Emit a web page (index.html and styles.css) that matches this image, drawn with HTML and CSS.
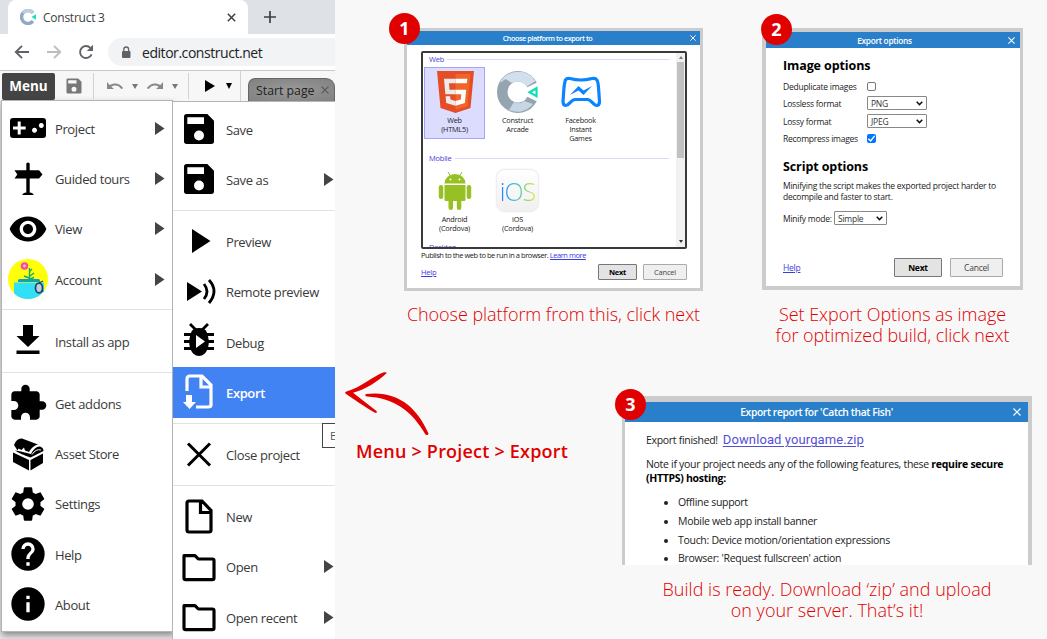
FILE: index.html
```html
<!DOCTYPE html>
<html lang="en">
<head>
<meta charset="utf-8">
<title>Construct 3 export guide</title>
<link rel="stylesheet" href="styles.css">
</head>
<body>
<svg class="defs" width="0" height="0">
  <symbol id="save" viewBox="0 0 24 24"><path fill-rule="evenodd" d="M4.6 3H17l4 4v12.400a1.600 1.600 0 0 1-1.600 1.600H4.600A1.600 1.600 0 0 1 3 19.400V4.600A1.600 1.600 0 0 1 4.600 3zM5 5v4h10V5zM12 12.900a3 3 0 1 0 0 6 3 3 0 0 0 0-6z"/></symbol>
  <symbol id="folder" viewBox="0 0 24 24"><path fill="none" stroke="currentColor" stroke-width="1.900" stroke-linejoin="round" d="M3 5.200h6.600l2 2H20a1 1 0 0 1 1 1v10.400a1 1 0 0 1-1 1H4a1 1 0 0 1-1-1z"/></symbol>
  <symbol id="caret" viewBox="0 0 10 13"><path d="M0 0l9.500 6.500L0 13z"/></symbol>
</svg>
<div class="page">
  <section class="browser">
    <div class="tabstrip">
      <div class="tab">
        <svg width="16" height="16" viewBox="0 0 42 42"><path d="M34 32A17 17 0 1 1 34 10" fill="none" stroke="#8fa9c4" stroke-width="9"/><path d="M8 10A17 17 0 0 1 33 9" fill="none" stroke="#bccfe2" stroke-width="9"/><path d="M42 14v14l-12-7z" fill="#19e0c0"/></svg>
        <span class="tab-title">Construct 3</span>
        <svg width="9" height="9" viewBox="0 0 9 9"><path d="M.8.8l7.400 7.400M8.200.8L.8 8.200" stroke="#3c4043" stroke-width="1.500"/></svg>
      </div>
      <svg class="plus" width="12" height="12" viewBox="0 0 12 12"><path d="M6 0v12M0 6h12" stroke="#3c4043" stroke-width="1.700"/></svg>
    </div>
    <div class="navbar">
      <svg width="16" height="16" viewBox="0 0 16 16"><path d="M15 8H2M8 1.800L1.800 8 8 14.200" fill="none" stroke="#5f6368" stroke-width="1.900"/></svg>
      <svg width="16" height="16" viewBox="0 0 16 16"><path d="M1 8h13M8 1.800L14.200 8 8 14.200" fill="none" stroke="#bbbdc0" stroke-width="1.900"/></svg>
      <svg width="16" height="16" viewBox="0 0 16 16"><path d="M13.600 10.300A6 6 0 1 1 12.400 3.900" fill="none" stroke="#5f6368" stroke-width="1.900"/><path d="M15 .8v6.200H8.800z" fill="#5f6368"/></svg>
      <div class="omnibox">
        <svg width="10" height="13" viewBox="0 0 10 13"><rect x="1" y="5" width="8.500" height="7" rx="1" fill="#5f6368"/><path d="M2.800 5.500V3.400a2.400 2.400 0 0 1 4.800 0v2.100" fill="none" stroke="#5f6368" stroke-width="1.300"/></svg>
        <span class="url">editor.construct.net</span>
      </div>
    </div>
    <div class="toolbar">
      <div class="menu-button"><span>Menu</span></div>
      <svg class="tb-save" width="20" height="20"><use href="#save"/></svg>
      <div class="tb-group history">
        <svg width="18" height="10" viewBox="0 0 18 10"><path d="M1 1v7h7L5.300 5.700C8 3.800 12.500 3.500 15.200 8l2-.7C14.200 1.800 8 1.300 3.600 4z" fill="#888"/></svg>
        <svg width="6" height="5" viewBox="0 0 6 5"><path d="M0 0h6L3 5z" fill="#777"/></svg>
        <svg width="18" height="10" viewBox="0 0 18 10"><path d="M17 1v7h-7l2.700-2.300C10 3.800 5.500 3.500 2.800 8l-2-.7C3.800 1.800 10 1.300 14.400 4z" fill="#888"/></svg>
        <svg width="6" height="5" viewBox="0 0 6 5"><path d="M0 0h6L3 5z" fill="#777"/></svg>
      </div>
      <div class="tb-group run">
        <svg width="10" height="12" viewBox="0 0 10 12"><path d="M0 0l10 6-10 6z"/></svg>
        <svg width="6" height="6" viewBox="0 0 6 6"><path d="M0 0h6L3 6z"/></svg>
      </div>
      <div class="tb-group tabs"><div class="start-tab"><span>Start page</span>
        <svg width="8" height="8" viewBox="0 0 8 8"><path d="M.5.5l7 7M7.500.5l-7 7" stroke="#5c5c5c" stroke-width="1.100"/></svg>
      </div></div>
    </div>
    <div class="menus">
      <div class="menu main-menu">
        <div class="item"><svg class="icon" viewBox="0 0 40 40"><path fill-rule="evenodd" d="M5 10h30q3 0 3 3v14q0 3-3 3H5q-3 0-3-3V13q0-3 3-3zm4.700 3.500v5H5v3h4.700v5h3v-5h5v-3h-5v-5zM33.300 15a2.500 2.500 0 1 0 .01 0zM26.500 19.700a2.500 2.500 0 1 0 .01 0z"/></svg><span>Project</span><svg class="caret"><use href="#caret"/></svg></div>
        <div class="item"><svg class="icon" viewBox="0 0 40 40"><path d="M18.300 5.500q1.700-1.800 3.400 0v6.700H31l3.500 4.300L31 20.500h-9.300v14q3.300 0 4 2.500H14.300q.7-2.500 4-2.500v-14H6.500l2.800-4-2.800-4.300h11.800z"/></svg><span>Guided tours</span><svg class="caret"><use href="#caret"/></svg></div>
        <div class="item"><svg class="icon" viewBox="0 0 24 24"><path d="M12 4.500C7 4.500 2.730 7.610 1 12c1.730 4.390 6 7.500 11 7.500s9.270-3.110 11-7.500c-1.730-4.390-6-7.500-11-7.500zM12 17c-2.760 0-5-2.240-5-5s2.240-5 5-5 5 2.240 5 5-2.240 5-5 5zm0-8c-1.660 0-3 1.340-3 3s1.340 3 3 3 3-1.340 3-3-1.340-3-3-3z"/></svg><span>View</span><svg class="caret"><use href="#caret"/></svg></div>
        <div class="item"><svg class="icon" viewBox="0 0 40 40"><defs><clipPath id="disc"><circle cx="20" cy="20" r="20"/></clipPath></defs><g clip-path="url(#disc)"><path fill="#ffff08" d="M0 0h40v40H0z"/><path d="M21.500 22V9M21 19l-5-2M22 17l4-3M21 13l3-3M22 20l4-1.500" stroke="#16a878" stroke-width="1.400" fill="none"/><circle cx="16.500" cy="7" r="3.800" fill="#f54da0"/><circle cx="16.500" cy="7" r="1.400" fill="#ffb8dc"/><path d="M6 23.500h30V40H12q-6-1-6-7z" fill="#32dff8"/><path d="M10 21.500q0-1.500 1.500-1.500h19q1.500 0 1.500 1.500V23H10z" fill="#10a5a9"/><ellipse cx="31" cy="29" rx="3.500" ry="4.800" fill="#c3cde0" stroke="#234265" stroke-width="1.700"/><path d="M31 24l4-2M34 31l2 3" stroke="#234265" stroke-width="1.300"/></g></svg><span>Account</span><svg class="caret"><use href="#caret"/></svg></div>
        <hr>
        <div class="item"><svg class="icon" viewBox="0 0 40 40"><path d="M15 4h10v11h6.500L20 26 8.500 15H15zM8.500 29.500h23V33h-23z"/></svg><span>Install as app</span></div>
        <hr>
        <div class="item"><svg class="icon" viewBox="0 0 24 24"><path d="M20.500 11H19V7c0-1.100-.9-2-2-2h-4V3.500a2.500 2.500 0 0 0-5 0V5H4c-1.100 0-1.990.9-1.990 2v3.800H3.500c1.490 0 2.700 1.210 2.700 2.700s-1.210 2.700-2.700 2.700H2V20c0 1.100.9 2 2 2h3.800v-1.500c0-1.490 1.210-2.700 2.700-2.700s2.700 1.210 2.700 2.700V22H17c1.100 0 2-.9 2-2v-4h1.500a2.500 2.500 0 0 0 0-5z"/></svg><span>Get addons</span></div>
        <div class="item"><svg class="icon" viewBox="0 0 40 40"><path d="M5 18.500l16 7.500V36.500L5 28zM22.500 26L35 19.500V29l-12.500 7.500zM6 11q2.500-7 8-6.500l16 6q-6 1.500-9 7.500l-4-1.500-1-3-2.500 2.500-3-1.500-1 2zM35.500 17l-13 6.500Q12 20 7 16.500l6 1 10 2.500q4-8 9-7.500 3.500 1 3.500 4.500z"/><path d="M24 20.500q4-6 9-4.500" fill="none" stroke="#fff" stroke-width="1"/></svg><span>Asset Store</span></div>
        <div class="item"><svg class="icon" viewBox="0 0 24 24"><path d="M19.430 12.980c.04-.32.07-.64.07-.98s-.03-.66-.07-.98l2.110-1.650c.19-.15.240-.42.120-.64l-2-3.460c-.12-.22-.39-.3-.61-.22l-2.490 1c-.52-.4-1.080-.73-1.690-.98l-.38-2.650A.488.488 0 0 0 14 2h-4c-.25 0-.46.180-.49.420l-.38 2.650c-.61.250-1.170.590-1.690.98l-2.490-1c-.23-.09-.49 0-.61.220l-2 3.460c-.13.220-.07.490.12.640l2.110 1.650c-.04.320-.07.650-.07.980s.03.660.07.980l-2.110 1.650c-.19.150-.24.420-.12.640l2 3.460c.12.220.39.300.61.220l2.490-1c.52.400 1.080.730 1.690.98l.38 2.650c.03.240.24.420.49.420h4c.25 0 .46-.18.490-.42l.38-2.650c.61-.25 1.170-.59 1.690-.98l2.490 1c.23.090.49 0 .61-.22l2-3.460c.12-.22.07-.49-.12-.64zM12 15.500a3.500 3.500 0 1 1 0-7 3.500 3.500 0 0 1 0 7z"/></svg><span>Settings</span></div>
        <div class="item"><svg class="icon" viewBox="0 0 24 24"><path d="M12 2a10 10 0 1 0 0 20 10 10 0 0 0 0-20zm1 17h-2v-2h2zm2.070-7.750l-.9.920C13.450 12.900 13 13.500 13 15h-2v-.5c0-1.100.45-2.100 1.170-2.830l1.240-1.260A2 2 0 1 0 10 9H8a4 4 0 1 1 8 0c0 .88-.36 1.680-.93 2.250z"/></svg><span>Help</span></div>
        <div class="item"><svg class="icon" viewBox="0 0 24 24"><path d="M12 2a10 10 0 1 0 0 20 10 10 0 0 0 0-20zm1 15h-2v-6h2zm0-8h-2V7h2z"/></svg><span>About</span></div>
      </div>
      <div class="menu sub-menu">
        <div class="item"><svg class="icon"><use href="#save"/></svg><span>Save</span></div>
        <div class="item"><svg class="icon"><use href="#save"/></svg><span>Save as</span><svg class="caret"><use href="#caret"/></svg></div>
        <hr>
        <div class="item"><svg class="icon" viewBox="0 0 40 40"><path d="M13 7l18.500 12L13 31z"/></svg><span>Preview</span></div>
        <div class="item"><svg class="icon" viewBox="0 0 40 40"><path d="M8 10l15 9.500L8 29z"/><path d="M25 12q6 7.500 0 15M30 8q10 11 0 23" fill="none" stroke="#000" stroke-width="2.800"/></svg><span>Remote preview</span></div>
        <div class="item"><svg class="icon" viewBox="0 0 40 40"><path d="M5 12.500h30M5 19.500h30M5 26.500h30M11 2l6 6M29 2l-6 6" stroke="#000" stroke-width="2.800"/><path d="M12 11q1-5 8-5t8 5q3 8 1 15-3 8-9 8t-9-8q-2-7 1-15z"/><path d="M17 13l9 6.500-9 6.500z" fill="#fff"/></svg><span>Debug</span></div>
        <div class="item selected"><svg class="icon" viewBox="0 0 40 40"><path d="M8 19V7q0-3 3-3h12l9 9v20q0 2-3 2H17M22 4v11h10" fill="none" stroke="#fff" stroke-width="3.200"/><path d="M7 23h6v7h4l-6.500 7L4 30h3z" fill="#fff"/></svg><span>Export</span></div>
        <hr>
        <div class="item"><svg class="icon" viewBox="0 0 40 40"><path d="M9 8.500l22 22M31 8.500l-22 22" stroke="#000" stroke-width="3"/></svg><span>Close project</span></div>
        <hr>
        <div class="item"><svg class="icon" viewBox="0 0 40 40"><path d="M10 4h13l9 9.500V33q0 2-2 2H10q-2 0-2-2V6q0-2 2-2zM21.500 4v11.500H32" fill="none" stroke="#000" stroke-width="3.200"/></svg><span>New</span></div>
        <div class="item"><svg class="icon"><use href="#folder"/></svg><span>Open</span><svg class="caret"><use href="#caret"/></svg></div>
        <div class="item"><svg class="icon"><use href="#folder"/></svg><span>Open recent</span><svg class="caret"><use href="#caret"/></svg></div>
        <div class="tooltip">E</div>
      </div>
    </div>
  </section>

  <main class="guide">
    <div class="row top-row">
      <article class="step step-1">
        <div class="badge">1</div>
        <div class="dialog">
          <header><span>Choose platform to export to</span><svg width="6" height="6" viewBox="0 0 8 8"><path d="M.5.5l7 7M7.500.5l-7 7" stroke="#fff" stroke-width="1.300"/></svg></header>
          <div class="content">
            <div class="listbox">
              <div class="list">
                <h4>Web</h4>
                <div class="tiles web-tiles">
                  <div class="tile chosen"><svg width="42" height="42" viewBox="0 0 42 42"><path d="M3 0h37l-3.500 37L21.500 42 6.500 37z" fill="#e44d26"/><path d="M21.500 3v36l12-3.700L36.500 3z" fill="#f16529"/><path d="M21.500 7.800H10l1.300 15.500h10.200v-4.500h-6l-.5-6.500h6.500zM21.500 30l-5-1.400-.4-3.300h-4.500l.6 6.800 9.300 2.600z" fill="#ebebeb"/><path d="M21.500 7.800h11.800l-.5 4.500H21.500zM21.500 18.800h10.700l-1.300 13.300-9.400 2.600V30l5.300-1.400.5-5.300h-5.800z" fill="#fff"/></svg><p>Web<br>(HTML5)</p></div>
                  <div class="tile"><svg width="42" height="42" viewBox="0 0 42 42"><path d="M35 28A15.700 15.700 0 1 1 35 14" fill="none" stroke="#95a5b0" stroke-width="10.500"/><path d="M3 12A20.500 20.500 0 0 1 38.500 10L30 15.500A11 11 0 0 0 15 12L8.500 8z" fill="#d2dfec"/><path d="M27 30l9 3A20 20 0 0 1 12 39l5-8q6 3 10-1z" fill="#c7d6e5"/><path d="M39.500 17.200v8l-7-4z" fill="#fff" stroke="#10ddb5" stroke-width="2.200"/></svg><p>Construct<br>Arcade</p></div>
                  <div class="tile"><svg width="42" height="42" viewBox="0 0 42 42"><path d="M10 7.500q11 3 22 0c5-1 6 2 6.500 9l1 14q0 4-3 4c-3 0-5-6-9-6H15c-4 0-6 6-9 6q-3 0-3-4l1-14c1-7 1-10 6-9z" fill="none" stroke="#0a84ff" stroke-width="3.200"/><path d="M10 24l8.500-9 5 4.500 8.500-4.500-8.500 9-5-4.500z" fill="#0a84ff"/></svg><p>Facebook<br>Instant<br>Games</p></div>
                </div>
                <h4>Mobile</h4>
                <div class="tiles mobile-tiles">
                  <div class="tile"><svg width="42" height="42" viewBox="0 0 42 42"><g fill="#97c024"><path d="M10.500 13.500a10.500 9.500 0 0 1 21 0zM10.500 15h21v14.500q0 1.500-1.500 1.500H12q-1.500 0-1.500-1.500z"/><rect x="4.800" y="15" width="4.500" height="14" rx="2.200"/><rect x="32.700" y="15" width="4.500" height="14" rx="2.200"/><rect x="14.500" y="28" width="4.500" height="12" rx="2.200"/><rect x="22.800" y="28" width="4.500" height="12" rx="2.200"/><path d="M14 2l3 5M28 2l-3 5" stroke="#97c024" stroke-width="1"/></g><circle cx="16.500" cy="9.500" r="1" fill="#fff"/><circle cx="25.500" cy="9.500" r="1" fill="#fff"/></svg><p>Android<br>(Cordova)</p></div>
                  <div class="tile"><div class="ios"><span>iOS</span></div><p>iOS<br>(Cordova)</p></div>
                </div>
                <h4>Desktop</h4>
              </div>
              <div class="scrollbar"><svg width="4" height="3" viewBox="0 0 4 3"><path d="M0 3l2-3 2 3z" fill="#777"/></svg><div class="thumb"></div><svg width="4" height="3" viewBox="0 0 4 3"><path d="M0 0l2 3 2-3z" fill="#333"/></svg></div>
            </div>
            <p class="desc">Publish to the web to be run in a browser. <a>Learn more</a></p>
            <div class="actions"><a>Help</a><div class="btn next">Next</div><div class="btn">Cancel</div></div>
          </div>
        </div>
        <p class="caption">Choose platform from this, click next</p>
      </article>

      <article class="step step-2">
        <div class="badge">2</div>
        <div class="dialog">
          <header><span>Export options</span><svg width="7" height="7" viewBox="0 0 8 8"><path d="M.5.5l7 7M7.500.5l-7 7" stroke="#fff" stroke-width="1.200"/></svg></header>
          <div class="content">
            <h3>Image options</h3>
            <div class="form">
              <span>Deduplicate images</span><i class="check"></i>
              <span>Lossless format</span><div class="select">PNG<svg width="7" height="5" viewBox="0 0 7 5"><path d="M.7.8l2.800 2.800L6.300.8" fill="none" stroke="#111" stroke-width="1.500"/></svg></div>
              <span>Lossy format</span><div class="select">JPEG<svg width="7" height="5" viewBox="0 0 7 5"><path d="M.7.8l2.800 2.800L6.300.8" fill="none" stroke="#111" stroke-width="1.500"/></svg></div>
              <span>Recompress images</span><i class="check on"><svg width="9" height="9" viewBox="0 0 8 8"><path d="M1.200 4.200l2 2L6.800 1.700" fill="none" stroke="#fff" stroke-width="1.300"/></svg></i>
            </div>
            <h3>Script options</h3>
            <p class="note">Minifying the script makes the exported project harder to<br>decompile and faster to start.</p>
            <div class="minify"><span>Minify mode:</span><div class="select">Simple<svg width="7" height="5" viewBox="0 0 7 5"><path d="M.7.8l2.800 2.800L6.300.8" fill="none" stroke="#111" stroke-width="1.500"/></svg></div></div>
            <div class="actions"><a>Help</a><div class="btn next">Next</div><div class="btn">Cancel</div></div>
          </div>
        </div>
        <p class="caption">Set Export Options as image<br>for optimized build, click next</p>
      </article>
    </div>

    <div class="row bottom-row">
      <div class="hint">
        <svg width="84" height="64" viewBox="0 0 84 64"><path d="M41.500 1.200C32 10 21 17 8 20.800L31.500 39c1 2-.5 2.500-2 1.500C18 34 9 27 .5 21.500q-1-1.500 1-2C17 15 27 4.500 39 .3q3-.6 2.500.9zM21 22c31-4 51 13 62.500 39.500q-.5 2.500-3 1C67 39 49 26 22 24.500q-3-.5-1-2.500z" fill="#e00000"/></svg>
        <p>Menu &gt; Project &gt; Export</p>
      </div>
      <article class="step step-3">
        <div class="badge">3</div>
        <div class="dialog">
          <header><span>Export report for 'Catch that Fish'</span><svg width="8" height="8" viewBox="0 0 8 8"><path d="M.5.5l7 7M7.500.5l-7 7" stroke="#fff" stroke-width="1.200"/></svg></header>
          <div class="content">
            <p class="finished"><span>Export finished!</span><a>Download yourgame.zip</a></p>
            <p class="need">Note if your project needs any of the following features, these <b>require secure</b><br><b>(HTTPS) hosting:</b></p>
            <ul>
              <li>Offline support</li>
              <li>Mobile web app install banner</li>
              <li>Touch: Device motion/orientation expressions</li>
              <li>Browser: 'Request fullscreen' action</li>
            </ul>
          </div>
        </div>
        <p class="caption">Build is ready. Download ‘zip’ and upload<br>on your server. That’s it!</p>
      </article>
    </div>
  </main>
</div>
</body>
</html>
```

FILE: styles.css
```css
* { box-sizing: border-box; }
body { margin: 0; }
p, h3, h4, ul { margin: 0; padding: 0; font-weight: 400; }
svg { display: block; flex: none; }
.defs { position: absolute; }
.page { display: flex; width: 1047px; height: 639px; overflow: hidden; background: #f8f8f8; font-family: "Open Sans", "Noto Sans", sans-serif; color: #222; }

/* browser window */
.browser { width: 335px; height: 639px; flex: none; display: flex; flex-direction: column; background: #e3e3e3; overflow: hidden; }
.tabstrip { height: 34px; flex: none; display: flex; align-items: center; background: #dee1e6; padding-left: 8px; }
.tab { width: 240px; height: 34px; border-radius: 8px 8px 0 0; background: #fff; display: flex; align-items: center; padding: 0 12px 0 12px; }
.tab-title { flex: 1; margin-left: 7px; font-size: 12px; letter-spacing: -.25px; color: #3c4043; }
.plus { margin-left: 16px; }
.navbar { height: 36px; flex: none; display: flex; align-items: center; gap: 16px; padding-left: 14px; background: #fff; }
.omnibox { flex: 1; height: 28px; margin-left: -2px; border-radius: 14px 0 0 14px; background: #f1f3f4; display: flex; align-items: center; gap: 12px; padding: 0 0 0 13px; }
.url { font-size: 14px; letter-spacing: -.45px; color: #202124; white-space: nowrap; margin-left: -1px; }
.toolbar { height: 31px; flex: none; display: flex; align-items: center; background: #f7f7f7; border-top: 1px solid #c8c8c8; padding-left: 2px; }
.menu-button { width: 53px; height: 27px; border-radius: 2px; background: #444; color: #fff; font-weight: 700; font-size: 13.500px; display: flex; align-items: center; justify-content: center; }
.tb-save { margin: 0 9px; color: #777; fill: #777; }
.tb-group { height: 26px; display: flex; align-items: center; border-left: 1px solid #d2d2d2; flex: none; }
.history { width: 95px; padding-left: 12px; gap: 8px; }
.run { width: 52px; padding-left: 16px; gap: 11px; }
.tabs { height: 30px; align-items: flex-end; padding-left: 7px; }
.start-tab { width: 87px; height: 23px; border: 1px solid #666; border-bottom: 0; border-radius: 7px 9px 0 0; background: radial-gradient(#9a9a9a, #808080); display: flex; align-items: center; gap: 6px; padding-left: 7px; font-size: 12.300px; color: #222; white-space: nowrap; }

/* menus */
.menus { flex: 1; display: flex; align-items: flex-start; padding-left: 1px; margin-top: -1px; position: relative; }
.menu { background: #fff; border: 1px solid #b4b4b4; }
.main-menu { width: 172px; height: 532px; padding-top: 2px; flex: none; box-shadow: 1px 3px 6px rgba(0,0,0,.4); }
.sub-menu { width: 163px; height: 560px; margin-top: 1px; margin-left: -1px; border-right: 0; padding-top: 2px; z-index: 1; position: relative; }
.item { height: 50.3px; display: flex; align-items: center; gap: 7px; padding-left: 6px; font-size: 13px; color: #3a3a3a; letter-spacing: -.38px; white-space: nowrap; }
.item span { flex: 1; padding-top: 1px; }
.icon { width: 40px; height: 40px; fill: #000; color: #000; }
.caret { width: 10px; height: 13px; margin-right: 7px; fill: #444; }
.sub-menu .caret { margin-right: 1px; }
.menu hr { border: 0; border-top: 1px solid #e2e2e2; margin: 5.300px 0 5.500px; }
.item.selected { background: #4283f4; color: #fff; font-weight: 600; }
.tooltip { position: absolute; left: 149px; top: 321px; width: 24px; height: 25px; border: 1px solid #444; background: #fff; padding: 5px 7px; font-size: 11px; line-height: 14px; color: #555; }

/* guide steps */
.guide { flex: 1; display: flex; flex-direction: column; }
.row { display: flex; }
.top-row { padding: 28px 0 0 69px; gap: 59px; height: 368px; }
.step { position: relative; }
.step-1 { width: 299px; }
.step-2 { width: 261px; }
.step-3 { width: 410px; }
.badge { position: absolute; left: -15px; top: -15px; width: 31px; height: 31px; border-radius: 50%; background: #e00000; color: #fff; font-size: 18px; font-weight: 700; line-height: 30px; text-align: center; }
.step-2 .badge { left: -1px; top: -14px; }
.step-3 .badge { left: -7px; top: -7px; }
.dialog { background: #fff; border: 3px solid #ccc; }
.dialog header { display: flex; align-items: center; background: #297fca; color: #fff; font-weight: 600; white-space: nowrap; }
.dialog header span { flex: 1; text-align: center; }
.dialog a { color: #3b3be0; text-decoration: underline; }
.btn { border: 1px solid #aaa; border-radius: 1px; background: #efefef; display: flex; align-items: center; justify-content: center; color: #444; }
.btn.next { border: 1px solid #777; background: #e3e3e3; color: #000; font-weight: 700; }
.actions { display: flex; align-items: center; }
.actions a { flex: 1; }
.caption { text-align: center; color: #e00000; font-size: 18px; font-weight: 350; letter-spacing: -.05px; line-height: 21px; white-space: nowrap; }

/* step 1 */
.step-1 .dialog { height: 263px; font-size: 7.500px; letter-spacing: -.22px; }
.step-1 header { height: 14px; padding: 0 4px 0 0; font-size: 7.300px; letter-spacing: -.45px; }
.step-1 header span { padding-right: 2px; }
.step-1 .content { padding: 6px 13px 0 14px; }
.listbox { height: 198px; border: 2px solid #3a3a3a; border-radius: 2px; display: flex; overflow: hidden; }
.list { flex: 1; height: 194px; padding-left: 1px; overflow: hidden; }
.list h4 { display: flex; align-items: center; gap: 3px; height: 14px; line-height: 10px; padding: 0 7px 2px 5px; color: #4a43d8; font-size: 7.500px; }
.list h4::after { content: ""; flex: 1; height: 1px; background: #d9d9fb; }
.tiles { display: flex; gap: 2px; }
.web-tiles { height: 85px; }
.mobile-tiles { height: 75px; }
.tile { width: 61px; height: 72px; border: 1px solid transparent; padding-top: 3px; display: flex; flex-direction: column; align-items: center; }
.tile.chosen { background: #dcdcff; border-color: #a5a2fa; }
.tile p { text-align: center; font-size: 7.300px; line-height: 9.2px; margin-top: 3px; white-space: nowrap; }
.ios { width: 43px; height: 43px; margin: -1px 0 0; border: 1px solid #eee; border-radius: 9px; background: linear-gradient(#fff, #f1eff0); display: flex; align-items: center; justify-content: center; box-shadow: 0 0 1px #ccc; flex: none; }
.ios span { font-size: 25px; font-weight: 300; letter-spacing: -1px; line-height: 30px; background: linear-gradient(90deg, #3078ff, #2fb9e8 35%, #67d08f 65%, #dce832); background-clip: text; -webkit-background-clip: text; color: transparent; }
.scrollbar { width: 9px; background: #f1f1f1; display: flex; flex-direction: column; align-items: center; padding: 3px 0 4px; }
.scrollbar .thumb { width: 7px; height: 96px; margin: 3px 0 auto; background: #c1c1c1; }
.desc { height: 15px; line-height: 13px; font-size: 7.500px; letter-spacing: -.45px; white-space: nowrap; }
.step-1 .actions { height: 17px; gap: 6px; margin-top: -1px; }
.step-1 .btn { width: 44px; height: 16px; }
.step-1 .btn.next { width: 39px; }
.step-1 .caption { margin-top: 13px; }

/* step 2 */
.step-2 .dialog { height: 262px; border-width: 4px 3px 4px 4px; font-size: 8.500px; letter-spacing: -.24px; }
.step-2 header { height: 16px; padding: 0 5px 0 0; font-size: 8.300px; letter-spacing: -.3px; }
.step-2 header span { padding-right: 5px; }
.step-2 .content { padding: 9px 17px 0; }
.step-2 h3 { font-size: 12.500px; font-weight: 700; line-height: 17px; color: #000; letter-spacing: -.1px; }
.form { display: grid; grid-template-columns: 84px 60px; grid-template-rows: 16px 18px 18px 16px; align-items: center; margin: 4px 0 12px; white-space: nowrap; }
.check { width: 9px; height: 9px; border: 1px solid #777; border-radius: 2px; }
.check.on { border: 0; background: #0075ff; }
.select { height: 14px; border: 1px solid #888; border-radius: 1px; display: flex; align-items: center; justify-content: space-between; padding: 0 3px; color: #333; }
.note { margin-top: 5px; line-height: 11.200px; white-space: nowrap; }
.minify { display: flex; align-items: center; gap: 3px; margin-top: 9px; }
.minify span { width: 48px; white-space: nowrap; }
.minify .select { width: 53px; }
.step-2 .actions { gap: 8px; margin-top: 33px; }
.step-2 .btn { width: 53px; height: 19px; }
.step-2 .btn.next { width: 48px; }
.step-2 .caption { margin-top: 14px; }

/* step 3 */
.hint { width: 287px; flex: none; padding: 4px 0 0 10px; color: #e00000; }
.hint p { margin: 3px 0 0 11px; font-size: 18px; letter-spacing: .2px; line-height: 24px; font-weight: 600; white-space: nowrap; }
.step-3 .dialog { height: 169px; border-width: 6px 4px 0 3px; overflow: hidden; font-size: 10.500px; letter-spacing: -.3px; }
.step-3 header { height: 20px; padding: 0 7px 0 0; font-size: 10.300px; letter-spacing: -.38px; }
.step-3 header span { padding-right: 5px; }
.step-3 .content { padding: 9px 21px 0; white-space: nowrap; }
.finished { display: flex; align-items: baseline; gap: 5px; height: 26px; line-height: 18px; }
.finished a { font-family: Roboto, sans-serif; font-size: 13px; letter-spacing: .1px; color: #554fd6; text-underline-offset: 2px; text-decoration-thickness: 1px; }
.need { line-height: 14px; height: 36px; }
.need b { color: #000; }
.step-3 ul { padding-left: 32px; }
.step-3 li { height: 18.800px; line-height: 18.800px; }
.step-3 .caption { margin-top: 14px; letter-spacing: .02px; }
.bottom-row .step-3 { margin-top: 28px; }
```
